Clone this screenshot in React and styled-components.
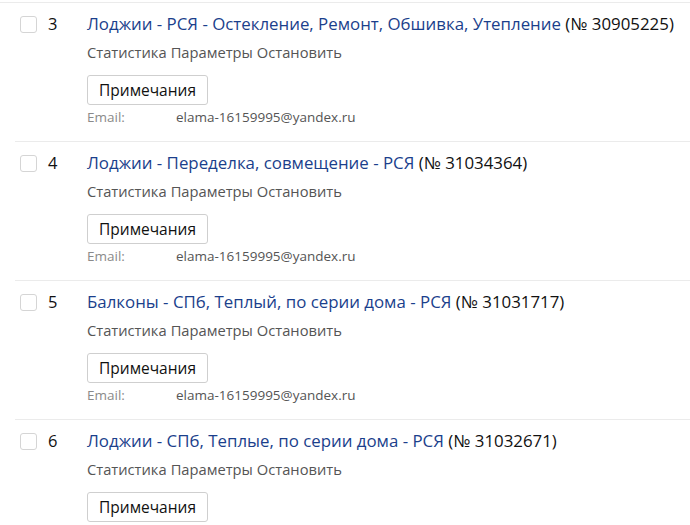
import React from 'react';
import styled, { createGlobalStyle } from 'styled-components';

const Global = createGlobalStyle`
  html, body { margin: 0; padding: 0; background: #fff; }
  body { font-family: "Open Sans", "Liberation Sans", sans-serif; }
`;

const List = styled.div`
  width: 690px;
  padding-left: 15px;
  box-sizing: border-box;
  border-top: 1px solid #ebebeb;
  margin-top: 2px;
`;

const Row = styled.div`
  display: flex;
  height: 139px;
  border-bottom: 1px solid #ebebeb;
  padding-top: 10px;
  box-sizing: border-box;
`;

const Check = styled.span`
  width: 15px;
  height: 15px;
  margin: 3px 0 0 5px;
  border: 1px solid #d5d5d5;
  border-radius: 3px;
  flex-shrink: 0;
`;

const Num = styled.div`
  width: 50px;
  padding-left: 11px;
  box-sizing: border-box;
  font-size: 16.5px;
  line-height: 22px;
  color: #111;
`;

const Body = styled.div`
  display: flex;
  flex-direction: column;
`;

const Title = styled.div`
  font-size: 16.85px;
  line-height: 22px;
  color: #111;
  white-space: nowrap;
`;

const Link = styled.a`
  color: #1b3f8c;
  text-decoration: none;
`;

const Actions = styled.div`
  display: flex;
  gap: 4px;
  margin-top: 8px;
  font-size: 14.7px;
  line-height: 18px;
  color: #555;
`;

const NoteButton = styled.button`
  margin-top: 14px;
  width: 121px;
  height: 30px;
  border: 1px solid #cfcfcf;
  border-radius: 3px;
  background: #fff;
  font-family: inherit;
  font-size: 15.5px;
  color: #111;
  padding: 0;
`;

const EmailRow = styled.div`
  display: flex;
  margin-top: 3px;
  font-size: 13.5px;
  line-height: 18px;
`;

const EmailLabel = styled.span`
  width: 89px;
  color: #8a8a8a;
`;

const EmailValue = styled.span`
  color: #555;
`;

const rows = [
  { n: 3, title: 'Лоджии - РСЯ - Остекление, Ремонт, Обшивка, Утепление', id: '30905225' },
  { n: 4, title: 'Лоджии - Переделка, совмещение - РСЯ', id: '31034364' },
  { n: 5, title: 'Балконы - СПб, Теплый, по серии дома - РСЯ', id: '31031717' },
  { n: 6, title: 'Лоджии - СПб, Теплые, по серии дома - РСЯ', id: '31032671' },
];

export default function App() {
  return (
    <>
      <Global />
      <List>
        {rows.map((r) => (
          <Row key={r.n}>
            <Check />
            <Num>{r.n}</Num>
            <Body>
              <Title>
                <Link href="#">{r.title}</Link> (№ {r.id})
              </Title>
              <Actions>
                <span>Статистика</span>
                <span>Параметры</span>
                <span>Остановить</span>
              </Actions>
              <NoteButton>Примечания</NoteButton>
              <EmailRow>
                <EmailLabel>Email:</EmailLabel>
                <EmailValue>elama-16159995@yandex.ru</EmailValue>
              </EmailRow>
            </Body>
          </Row>
        ))}
      </List>
    </>
  );
}
